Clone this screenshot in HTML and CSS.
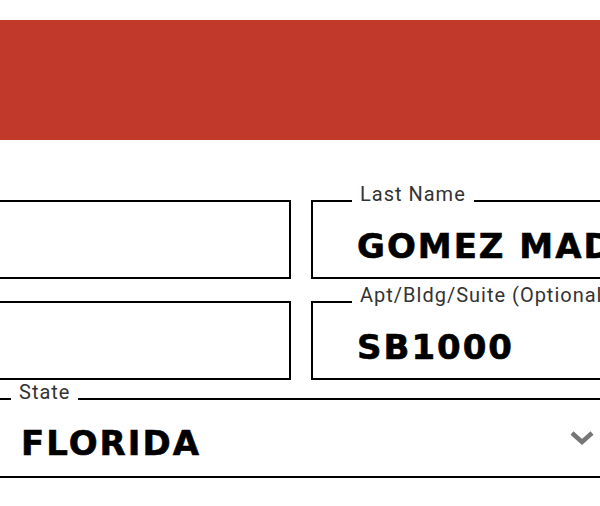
FILE: index.html
```html
<!DOCTYPE html>
<html>
<head>
<meta name="viewport" content="width=device-width, initial-scale=1">
<link rel="stylesheet" href="styles.css">
</head>
<body>

<!-- ************************ banner ******************************** -->
<header class="banner"></header>

<!-- ************************ address form ******************************** -->
<form class="address-form">
  <div class="form-grid">
    <fieldset class="field field-plain">
      <input class="field-input" type="text" value="" aria-label="First Name">
    </fieldset>
    <fieldset class="field">
      <legend>Last Name</legend>
      <input class="field-input" type="text" value="GOMEZ MADRIGAL">
    </fieldset>
    <fieldset class="field field-plain">
      <input class="field-input" type="text" value="" aria-label="Street Address">
    </fieldset>
    <fieldset class="field">
      <legend>Apt/Bldg/Suite (Optional)</legend>
      <input class="field-input" type="text" value="SB1000">
    </fieldset>
  </div>

  <fieldset class="field field-state">
    <legend>State</legend>
    <select class="field-input field-select">
      <option>FLORIDA</option>
    </select>
    <svg class="chevron" width="24" height="14" viewBox="0 0 24 14">
      <polyline points="2,2 12,11 22,2" fill="none" stroke="#767676" stroke-width="4.5"/>
    </svg>
  </fieldset>
</form>

</body>
</html>
```

FILE: styles.css
```css
* {box-sizing: border-box}
html, body {overflow: hidden;}
body {
  margin: 0;
  background: #fff;
  font-family: "Roboto", sans-serif;
}

/* red band on top */
.banner {
  margin-top: 20px;
  height: 120px;
  background-color: #c0392b;
}

.address-form {
  margin-top: 44px;
}

/* two columns, the left one runs off the left edge */
.form-grid {
  display: grid;
  grid-template-columns: 520px 520px;
  column-gap: 20px;
  row-gap: 6px;
  margin-left: -229px;
}

/* outlined field with the label sitting in the border */
.field {
  margin: 0;
  min-width: 0;
  border: 2px solid #000;
  padding: 0 0 0 39px;
}

.field legend {
  padding: 0 8px 14px;
  font-size: 20px;
  line-height: 20px;
  letter-spacing: 1px;
  color: #333;
  white-space: nowrap;
}

/* fields without a visible label */
.field-plain {
  margin-top: 16px;
}

.field-plain .field-input {
  height: 75px;
  padding-top: 16px;
}

.field-input {
  display: block;
  width: 100%;
  height: 59px;
  margin: 0;
  border: none;
  outline: none;
  background: transparent;
  padding: 0 0 3px 5px;
  font-family: "DejaVu Sans", sans-serif;
  font-weight: bold;
  font-size: 34px;
  letter-spacing: 2px;
  color: #000;
  -webkit-text-stroke: 0.6px #000;
}

/* state dropdown */
.field-state {
  display: flex;
  align-items: center;
  width: 660px;
  margin-top: 2px;
  margin-left: -30px;
  padding-right: 34px;
}

.field-select {
  flex: 1;
  height: 60px;
  padding: 0 0 6px 10px;
  appearance: none;
  -webkit-appearance: none;
}

.chevron {
  flex: none;
  margin-bottom: 16px;
}
```
